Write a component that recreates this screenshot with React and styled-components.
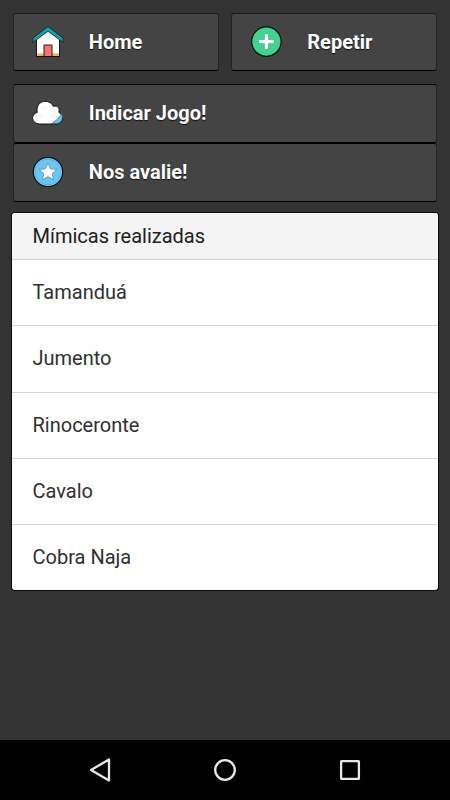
import React from 'react';
import styled, { createGlobalStyle } from 'styled-components';

const GlobalStyle = createGlobalStyle`
    * {
        box-sizing : border-box;
    }
    body {
        margin : 0;
        background : #333333;
        font-family : Roboto, "Liberation Sans", sans-serif;
    }
`

const Screen = styled.div`
    height : 800px;
    display : flex;
    flex-direction : column;
    background : #333333;
`

const Content = styled.main`
    flex : 1;
    padding : 12.5px 13px 0 12.5px;
`

const ButtonGroup = styled.div`
    display : flex;
    flex-direction : ${props => props.$stacked ? 'column' : 'row'};
    gap : ${props => props.$stacked ? 0 : '12.5px'};
    margin-bottom : ${props => props.$stacked ? '11.7px' : '12.5px'};
`

const MenuButton = styled.button`
    flex : 1 1 auto;
    width : 100%;
    height : ${props => props.$dark ? '59px' : '58.6px'};
    min-height : 58.6px;
    display : flex;
    align-items : center;
    gap : 24.3px;
    padding : 0 0 0 17px;
    border : 1px solid #222222;
    border-bottom-color : #000000;
    border-top-color : ${props => props.$dark ? '#000000' : '#1c1c1c'};
    border-radius : 3px;
    background : #444444;
    color : white;
    font-family : inherit;
    font-size : 20px;
    font-weight : 700;
    line-height : 24px;
    text-align : left;
    text-shadow : 0 1px 1px #111111;

    svg {
        flex : none;
    }
`

const List = styled.ul`
    margin : 0 -1px 0 -0.5px;
    padding : 0;
    list-style : none;
    border-radius : 3px;
    box-shadow : 0 0 0 1px #0c0c0c;
    overflow : hidden;
    background : white;
    color : #303030;
    font-size : 20px;
`

const ListHeader = styled.li`
    height : 46px;
    padding : 0 20.5px;
    line-height : 46px;
    background : #f4f4f4;
    color : #202020;
`

const ListItem = styled.li`
    height : 66.2px;
    padding : 0 20.5px;
    border-top : 1px solid #d5d5d5;
    line-height : 65px;
`

const NavBar = styled.nav`
    height : 60px;
    display : flex;
    justify-content : space-between;
    padding : 14px 84px;
    background : #000000;
`

const HomeIcon = () => (
    <svg width="34" height="34" viewBox="0 0 34 34">
        <path d="M5.5 14 17 5l11.5 9v17.5h-23z" fill="#fff" stroke="#151515" />
        <path d="M6 28.5h22V31H6z" fill="#f3b54a" />
        <path d="M13 20h8v11.5h-8z" fill="#f97373" stroke="#222" />
        <path d="M5.5 31.5h23" stroke="#111" />
        <path d="M17 1.5 1.8 13.2v4.2L17 6.3l15.2 11.1v-4.2z" fill="#10a5ad" stroke="#111" strokeWidth=".8" strokeLinejoin="round" />
        <path d="M9 17h3m9-3h3m0 9h3m-18 1h3" stroke="#e8e8e8" strokeWidth=".8" />
    </svg>
)

const PlusIcon = () => (
    <svg width="34" height="34" viewBox="0 0 34 34">
        <circle cx="17.4" cy="16.6" r="14.7" fill="#40d58e" stroke="#111" strokeWidth="1.2" />
        <path d="M15.4 8.8h4v5.8h5.8v4h-5.8v5.8h-4v-5.8H9.6v-4h5.8z" fill="#fff" stroke="#379c70" strokeWidth=".6" />
    </svg>
)

const CloudIcon = () => (
    <svg width="34" height="34" viewBox="0 0 34 34">
        <path d="M8 28C-.2 27.2-.2 18 6.2 16.4 5 10 8.8 5.3 14.2 5.3c3.8 0 6.8 2 8.2 5.1 4.4-1.4 6.7 2 5.4 6 5.2 2 5.2 10.7-1.7 11.6z" fill="#fff" stroke="#111" />
        <path d="M20.5 27.6c3.7-2 8.5-6.5 10-10.1 2.4 4 0 9.9-5.2 10.1z" fill="#64c1f5" stroke="#22485d" strokeWidth=".6" />
        <path d="m12 11 4 1.6M7 20h4m8 0h4l1-1.5" fill="none" stroke="#e2e2e2" strokeWidth=".9" />
    </svg>
)

const StarIcon = () => (
    <svg width="34" height="34" viewBox="0 0 34 34">
        <circle cx="17" cy="17" r="14.7" fill="#6bc5f6" stroke="#111" strokeWidth="1.2" />
        <circle cx="17" cy="17" r="12.7" fill="none" stroke="#55aedc" strokeWidth=".6" />
        <path d="m17 8.2 2.6 5.6 6 .7-4.4 4.1 1.2 6-5.4-3-5.4 3 1.2-6-4.4-4.1 6-.7z" fill="#fff" stroke="#3f7390" strokeWidth=".6" strokeLinejoin="round" />
    </svg>
)

const BackIcon = () => (
    <svg width="32" height="32" viewBox="0 0 32 32" fill="none" stroke="#e8e8e8" strokeWidth="2.3" strokeLinejoin="round">
        <path d="M7 16 25 5.5v21z" />
    </svg>
)

const CircleIcon = () => (
    <svg width="32" height="32" viewBox="0 0 32 32" fill="none" stroke="#e8e8e8" strokeWidth="2.3">
        <circle cx="16" cy="16" r="9.8" />
    </svg>
)

const SquareIcon = () => (
    <svg width="32" height="32" viewBox="0 0 32 32" fill="none" stroke="#e8e8e8" strokeWidth="2.3">
        <rect x="7.1" y="7.1" width="17.8" height="17.8" rx=".5" />
    </svg>
)

const mimicas = ['Tamanduá', 'Jumento', 'Rinoceronte', 'Cavalo', 'Cobra Naja'];

export default function App(){
    return (
        <Screen>
            <GlobalStyle />
            <Content>
                <ButtonGroup>
                    <MenuButton><HomeIcon />Home</MenuButton>
                    <MenuButton><PlusIcon />Repetir</MenuButton>
                </ButtonGroup>
                <ButtonGroup $stacked>
                    <MenuButton $dark><CloudIcon />Indicar Jogo!</MenuButton>
                    <MenuButton $dark><StarIcon />Nos avalie!</MenuButton>
                </ButtonGroup>
                <List>
                    <ListHeader>Mímicas realizadas</ListHeader>
                    {mimicas.map(nome => <ListItem key={nome}>{nome}</ListItem>)}
                </List>
            </Content>
            <NavBar>
                <BackIcon />
                <CircleIcon />
                <SquareIcon />
            </NavBar>
        </Screen>
    );
};
